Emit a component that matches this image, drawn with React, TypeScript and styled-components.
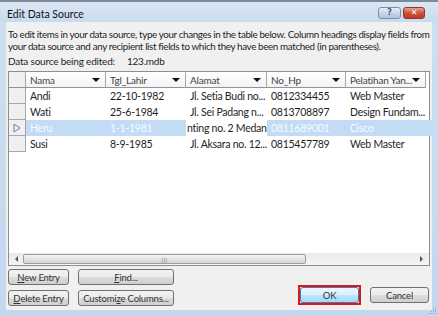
import styled, { createGlobalStyle } from "styled-components";

const GlobalStyle = createGlobalStyle`
  html, body {
    margin: 0;
    padding: 0;
    background: #c7daee;
  }
  body {
    font-family: Lato, "Noto Sans", sans-serif;
    font-size: 10px;
    color: #1e1e1e;
  }
`;

const Window = styled.div`
  position: relative;
  width: 438px;
  height: 316px;
  box-sizing: border-box;
  display: flex;
  flex-direction: column;
  background: linear-gradient(#cfdff0, #c3d7ed);
  border-top: 2px solid #7d8a99;
  overflow: hidden;
`;

const TitleBar = styled.div`
  height: 20px;
  box-sizing: border-box;
  padding: 4px 13px 0 7px;
  display: flex;
  align-items: center;
  justify-content: space-between;
  background: linear-gradient(#dbe7f4, #c9dbef);
`;

const Title = styled.span`
  font-size: 10.5px;
  color: #111;
`;

const Caption = styled.div`
  display: flex;
  gap: 2px;
  margin-top: -2px;
`;

const CaptionButton = styled.div<{ $close?: boolean }>`
  width: ${(p) => (p.$close ? 20 : 21)}px;
  height: 10px;
  border: 1px solid ${(p) => (p.$close ? "#8a3a2c" : "#7f8fa6")};
  border-radius: 3px;
  background: ${(p) =>
    p.$close
      ? "linear-gradient(#e8a08a, #cf4b32 55%, #c0392a)"
      : "linear-gradient(#e6eef8, #c4d4e8 55%, #b3c6de)"};
  display: flex;
  align-items: center;
  justify-content: center;
  color: ${(p) => (p.$close ? "#fff" : "#465a75")};
  font-family: "DejaVu Sans", sans-serif;
  font-weight: bold;
  font-size: 8px;
  line-height: 1;
`;

const Body = styled.div`
  flex: 1;
  margin: 0 6px 6px;
  padding: 6px 2px 4px;
  background: #f0f0f0;
  display: flex;
  flex-direction: column;
`;

const Intro = styled.p`
  margin: 0;
  font-size: 9.8px;
  line-height: 12px;
  letter-spacing: -0.36px;
  white-space: nowrap;
`;

const SourceLine = styled.div`
  margin-top: 3px;
  line-height: 12px;
  display: flex;
  gap: 12px;
  letter-spacing: -0.2px;
`;

const Table = styled.div`
  margin-top: 4px;
  flex: 1;
  border: 1px solid #8a8f96;
  background: #fff;
  display: flex;
  flex-direction: column;
`;

const cols = "17px 80px 80px 81px 79px 80px 1fr";

const Row = styled.div`
  display: grid;
  grid-template-columns: ${cols};
  height: 16px;
`;

const HeadCell = styled.div<{ $corner?: boolean }>`
  display: flex;
  align-items: center;
  justify-content: space-between;
  padding: 0 5px 0 4px;
  border-right: 1px solid #a4a8ae;
  border-bottom: 1px solid #8f949b;
  background: ${(p) => (p.$corner ? "#f0f0f0" : "linear-gradient(#ffffff, #f3f3f3)")};
  color: #444;
  letter-spacing: -0.2px;
  white-space: nowrap;
  overflow: hidden;
`;

const Arrow = styled.span`
  width: 0;
  height: 0;
  border-left: 4px solid transparent;
  border-right: 4px solid transparent;
  border-top: 4px solid #111;
  flex: none;
`;

const RowHead = styled.div`
  border-right: 1px solid #a4a8ae;
  border-bottom: 1px solid #a4a8ae;
  background: #f0f0f0;
  display: flex;
  align-items: center;
  justify-content: center;
`;

const Pointer = styled.svg`
  width: 8px;
  height: 10px;
`;

const Cell = styled.div<{ $sel?: boolean; $edit?: boolean }>`
  display: flex;
  align-items: center;
  padding: 0 ${(p) => (p.$edit ? "1px" : "4px")};
  white-space: nowrap;
  overflow: hidden;
  font-size: 10.5px;
  letter-spacing: -0.25px;
  background: ${(p) => (p.$edit ? "#fff" : p.$sel ? "#c2dcf5" : "transparent")};
  color: ${(p) => (p.$sel && !p.$edit ? "#f6fbff" : "#1e1e1e")};
`;

const Fill = styled.div`
  flex: 1;
`;

const ScrollBar = styled.div`
  height: 12px;
  display: flex;
  align-items: center;
  background: linear-gradient(#eaeaea, #f4f4f4);
  padding: 0 1px;
`;

const ScrollArrow = styled.div<{ $right?: boolean }>`
  width: 13px;
  display: flex;
  justify-content: center;
  &::before {
    content: "";
    border-top: 3px solid transparent;
    border-bottom: 3px solid transparent;
    ${(p) => (p.$right ? "border-left: 3px solid #555;" : "border-right: 3px solid #555;")}
  }
`;

const Thumb = styled.div`
  width: 283px;
  height: 10px;
  border: 1px solid #9c9c9c;
  border-radius: 2px;
  box-sizing: border-box;
  background: linear-gradient(#f6f6f6, #e2e2e2 50%, #d6d6d6);
  display: flex;
  align-items: center;
  justify-content: center;
  color: #777;
  font-size: 6px;
  letter-spacing: 0.5px;
`;

const Track = styled.div`
  flex: 1;
`;

const Footer = styled.div`
  margin-top: 3px;
  display: flex;
  justify-content: space-between;
  align-items: flex-end;
`;

const LeftButtons = styled.div`
  display: grid;
  grid-template-columns: 61px 96px;
  column-gap: 9px;
  row-gap: 5px;
`;

const RightButtons = styled.div`
  display: flex;
  gap: 9px;
  align-items: center;
  margin-right: 1px;
  margin-bottom: 1px;
`;

const Button = styled.div<{ $primary?: boolean; $w?: number }>`
  height: 16px;
  width: ${(p) => (p.$w ? `${p.$w}px` : "auto")};
  box-sizing: border-box;
  border: 1px solid ${(p) => (p.$primary ? "#3c7fb1" : "#707070")};
  border-radius: 3px;
  background: ${(p) =>
    p.$primary
      ? "linear-gradient(#eaf6fd, #d9f0fc 50%, #bee6fd 51%, #a7d9f5)"
      : "linear-gradient(#f2f2f2, #ebebeb 50%, #dddddd 51%, #cfcfcf)"};
  display: flex;
  align-items: center;
  justify-content: center;
  color: #333;
  font-size: 9.5px;
  letter-spacing: -0.2px;
  white-space: nowrap;
`;

const Highlight = styled.div`
  border: 2px solid #e0141c;
`;

const Grip = styled.svg`
  position: absolute;
  right: 1px;
  bottom: 1px;
  width: 10px;
  height: 10px;
`;

const columns = ["Nama", "Tgl_Lahir", "Alamat", "No_Hp", "Pelatihan Yan..."];

const rows = [
  ["Andi", "22-10-1982", "Jl. Setia Budi no...", "0812334455", "Web Master"],
  ["Wati", "25-6-1984", "Jl. Sei Padang n...", "0813708897", "Design Fundam..."],
  ["Heru", "1-1-1981", "nting no. 2 Medan", "0811689001", "Cisco"],
  ["Susi", "8-9-1985", "Jl. Aksara no. 12...", "0815457789", "Web Master"],
];

const selected = 2;

export default function App() {
  return (
    <>
      <GlobalStyle />
      <Window>
        <TitleBar>
          <Title>Edit Data Source</Title>
          <Caption>
            <CaptionButton>?</CaptionButton>
            <CaptionButton $close>✕</CaptionButton>
          </Caption>
        </TitleBar>
        <Body>
          <Intro>
            To edit items in your data source, type your changes in the table below. Column headings display fields from
            <br />
            your data source and any recipient list fields to which they have been matched (in parentheses).
          </Intro>
          <SourceLine>
            <span>Data source being edited:</span>
            <span>123.mdb</span>
          </SourceLine>
          <Table>
            <Row>
              <HeadCell $corner />
              {columns.map((c) => (
                <HeadCell key={c}>
                  {c}
                  <Arrow />
                </HeadCell>
              ))}
            </Row>
            {rows.map((r, i) => (
              <Row key={i}>
                <RowHead>
                  {i === selected && (
                    <Pointer viewBox="0 0 8 10">
                      <path d="M1 1 L7 5 L1 9 Z" fill="none" stroke="#6d7f96" strokeWidth="1" />
                    </Pointer>
                  )}
                </RowHead>
                {r.map((v, j) => (
                  <Cell key={j} $sel={i === selected} $edit={i === selected && j === 2}>
                    {v}
                  </Cell>
                ))}
                <Cell $sel={i === selected} />
              </Row>
            ))}
            <Fill />
            <ScrollBar>
              <ScrollArrow />
              <Thumb>|||</Thumb>
              <Track />
              <ScrollArrow $right />
            </ScrollBar>
          </Table>
          <Footer>
            <LeftButtons>
              <Button>
                <u>N</u>ew Entry
              </Button>
              <Button>
                <u>F</u>ind...
              </Button>
              <Button>
                <u>D</u>elete Entry
              </Button>
              <Button>
                Customi<u>z</u>e Columns...
              </Button>
            </LeftButtons>
            <RightButtons>
              <Highlight>
                <Button $primary $w={59}>
                  OK
                </Button>
              </Highlight>
              <Button $w={59}>Cancel</Button>
            </RightButtons>
          </Footer>
        </Body>
        <Grip viewBox="0 0 10 10">
          <g fill="#8ea3bd">
            <rect x="8" y="2" width="1" height="1" />
            <rect x="6" y="4" width="1" height="1" />
            <rect x="8" y="4" width="1" height="1" />
            <rect x="4" y="6" width="1" height="1" />
            <rect x="6" y="6" width="1" height="1" />
            <rect x="8" y="6" width="1" height="1" />
            <rect x="2" y="8" width="1" height="1" />
            <rect x="4" y="8" width="1" height="1" />
            <rect x="6" y="8" width="1" height="1" />
            <rect x="8" y="8" width="1" height="1" />
          </g>
        </Grip>
      </Window>
    </>
  );
}
